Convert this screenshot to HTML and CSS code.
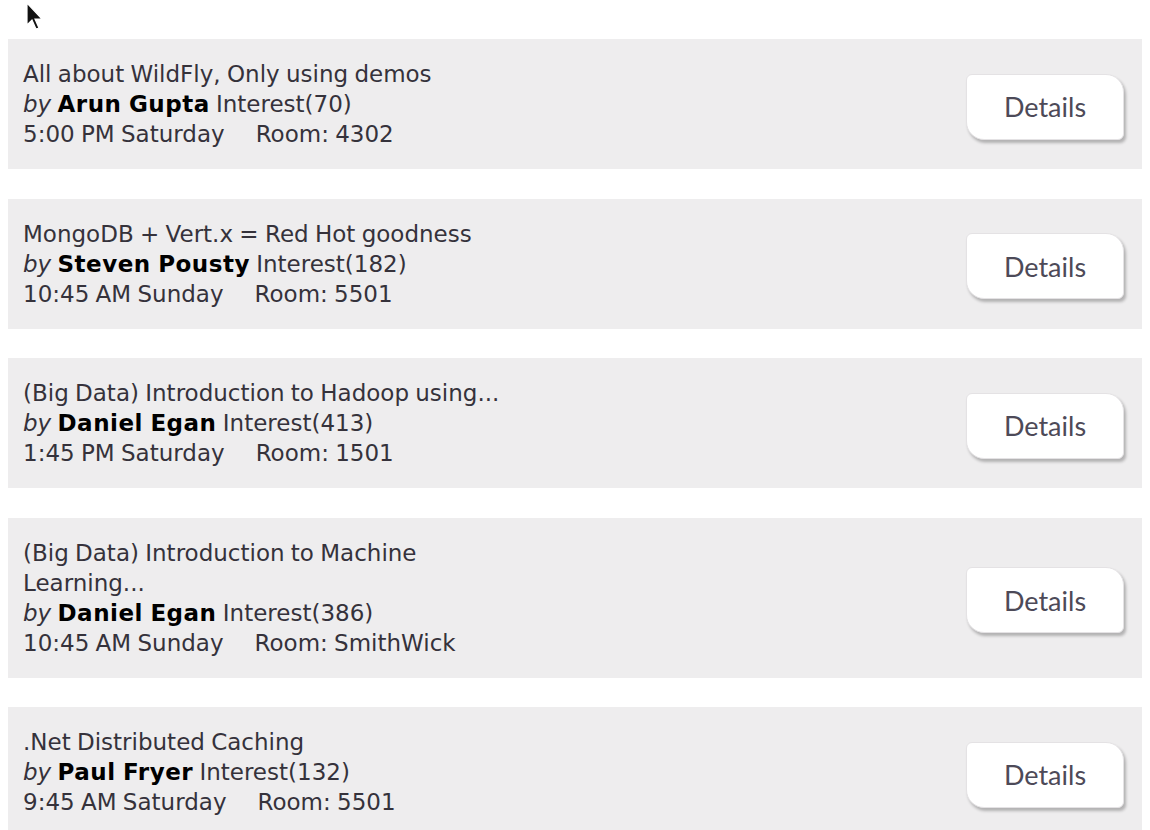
FILE: index.html
```html
<!DOCTYPE html>
<html>
<head>
<meta charset="utf-8">
<link rel="stylesheet" href="styles.css">
</head>
<body>
<svg class="cursor" width="22" height="32" viewBox="0 0 22 32"><path d="M1 1 L1 23 L6 18 L10 27 L13 26 L9 17 L16 17 Z" fill="#111" stroke="#fff" stroke-width="1.2"/></svg>
<div class="list">
  <div class="card">
    <div class="info">
      <div class="title">All about WildFly, Only using demos</div>
      <div class="meta"><i>by</i> <b class="name">Arun Gupta</b> Interest(70)</div>
      <div class="when">5:00 PM Saturday<span class="room">Room: 4302</span></div>
    </div>
    <button class="details">Details</button>
  </div>
  <div class="card">
    <div class="info">
      <div class="title">MongoDB + Vert.x = Red Hot goodness</div>
      <div class="meta"><i>by</i> <b class="name">Steven Pousty</b> Interest(182)</div>
      <div class="when">10:45 AM Sunday<span class="room">Room: 5501</span></div>
    </div>
    <button class="details">Details</button>
  </div>
  <div class="card">
    <div class="info">
      <div class="title">(Big Data) Introduction to Hadoop using...</div>
      <div class="meta"><i>by</i> <b class="name">Daniel Egan</b> Interest(413)</div>
      <div class="when">1:45 PM Saturday<span class="room">Room: 1501</span></div>
    </div>
    <button class="details">Details</button>
  </div>
  <div class="card">
    <div class="info">
      <div class="title">(Big Data) Introduction to Machine<br>Learning...</div>
      <div class="meta"><i>by</i> <b class="name">Daniel Egan</b> Interest(386)</div>
      <div class="when">10:45 AM Sunday<span class="room">Room: SmithWick</span></div>
    </div>
    <button class="details">Details</button>
  </div>
  <div class="card">
    <div class="info">
      <div class="title">.Net Distributed Caching</div>
      <div class="meta"><i>by</i> <b class="name">Paul Fryer</b> Interest(132)</div>
      <div class="when">9:45 AM Saturday<span class="room">Room: 5501</span></div>
    </div>
    <button class="details">Details</button>
  </div>
</div>
</body>
</html>
```
FILE: styles.css
```css
html, body { margin: 0; background: #fff; }
body { padding: 39px 8px 0 8px; font-family: "DejaVu Sans", sans-serif; position: relative; }
.cursor { position: absolute; left: 26px; top: 2px; }
.list { display: flex; flex-direction: column; gap: 29.5px; }
.card {
  background: #eeedee;
  display: flex;
  align-items: center;
  justify-content: space-between;
  padding: 20px 18px 20px 15px;
}
.info { font-size: 23px; line-height: 30px; color: #35323b; letter-spacing: 0; word-spacing: -1px; }
.name { font-weight: bold; color: #000; letter-spacing: 0.5px; }
.meta i { font-style: oblique; letter-spacing: 0; }
.room { margin-left: 31px; }
.details {
  width: 158px;
  height: 66px;
  margin-top: 5px;
  background: #fff;
  border: 1px solid #e4e2e4;
  border-radius: 6px 18px 6px 18px;
  box-shadow: 2px 3px 3px rgba(0,0,0,0.25);
  font-family: Lato, "Open Sans", sans-serif;
  font-size: 27px;
  color: #4d4a58;
  padding: 0;
}
```
